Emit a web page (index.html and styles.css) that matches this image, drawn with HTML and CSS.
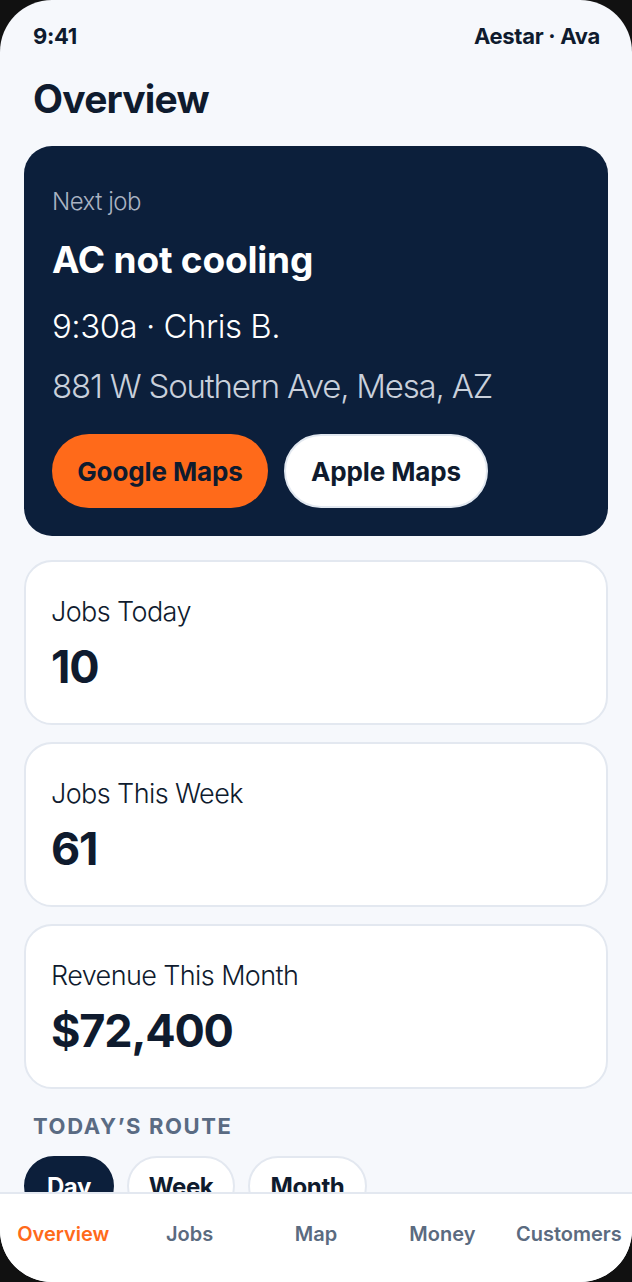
FILE: index.html
```html
<!DOCTYPE html>
<html lang="en">
<head>
<meta charset="utf-8">
<title>Overview</title>
<link rel="stylesheet" href="styles.css">
</head>
<body>
<div class="phone">
  <div class="scroll">
    <div class="status">
      <span class="time">9:41</span>
      <span class="account">Aestar · Ava</span>
    </div>
    <h1 class="title">Overview</h1>
    <section class="next">
      <div class="next-label">Next job</div>
      <div class="next-title">AC not cooling</div>
      <div class="next-when">9:30a · Chris B.</div>
      <div class="next-addr">881 W Southern Ave, Mesa, AZ</div>
      <div class="next-actions">
        <button class="btn btn-orange">Google Maps</button>
        <button class="btn btn-white">Apple Maps</button>
      </div>
    </section>
    <section class="stat">
      <div class="stat-label">Jobs Today</div>
      <div class="stat-value">10</div>
    </section>
    <section class="stat">
      <div class="stat-label">Jobs This Week</div>
      <div class="stat-value">61</div>
    </section>
    <section class="stat">
      <div class="stat-label">Revenue This Month</div>
      <div class="stat-value">$72,400</div>
    </section>
    <div class="route-head">TODAY’S ROUTE</div>
    <div class="pills">
      <span class="pill pill-active">Day</span>
      <span class="pill">Week</span>
      <span class="pill">Month</span>
    </div>
  </div>
  <nav class="tabbar">
    <span class="tab tab-active">Overview</span>
    <span class="tab">Jobs</span>
    <span class="tab">Map</span>
    <span class="tab">Money</span>
    <span class="tab">Customers</span>
  </nav>
</div>
</body>
</html>
```
FILE: styles.css
```css
* { box-sizing: border-box; }
html, body { margin: 0; padding: 0; background: #111111; }
body { font-family: "Inter", "Noto Sans", sans-serif; color: #0f1b2e; }
.phone {
  position: relative;
  width: 632px;
  height: 1282px;
  border-radius: 52px;
  overflow: hidden;
  background: #f6f8fc;
}
.scroll { padding: 0 24px; }
.status {
  display: flex;
  justify-content: space-between;
  padding: 22px 8px 0 9px;
  font-size: 22px;
  line-height: 28px;
  font-weight: 700;
  letter-spacing: -0.3px;
}
.title {
  margin: 25px 0 0 9px;
  font-size: 39px;
  line-height: 48px;
  font-weight: 700;
  letter-spacing: -0.8px;
}
.next {
  margin-top: 23px;
  background: #0c1f3b;
  border-radius: 28px;
  padding: 41px 28px 28px;
  height: 390px;
}
.next-label {
  color: #aab3c2;
  font-size: 24px;
  line-height: 30px;
  font-weight: 300;
  letter-spacing: -0.5px;
}
.next-title {
  margin-top: 21px;
  color: #ffffff;
  font-size: 37px;
  line-height: 44px;
  font-weight: 700;
  letter-spacing: -0.2px;
}
.next-when {
  margin-top: 24px;
  color: #ffffff;
  font-size: 33px;
  line-height: 40px;
  font-weight: 300;
  letter-spacing: -0.5px;
}
.next-addr {
  margin-top: 20px;
  color: #c9d0db;
  font-size: 33px;
  line-height: 40px;
  font-weight: 300;
  letter-spacing: -1.2px;
}
.next-actions {
  display: flex;
  gap: 16px;
  margin-top: 28px;
}
.btn {
  height: 74px;
  border-radius: 37px;
  font-family: inherit;
  font-size: 26px;
  font-weight: 700;
  letter-spacing: -0.1px;
  color: #0f1b2e;
  cursor: pointer;
  padding: 0;
}
.btn-orange { width: 216px; background: #ff6a1a; border: none; }
.btn-white { width: 204px; background: #ffffff; border: 2px solid #e2e8f0; }
.stat {
  margin-top: 24px;
  height: 165px;
  background: #ffffff;
  border: 2px solid #e3e8f0;
  border-radius: 28px;
  padding: 33px 25px 0;
}
.stat + .stat { margin-top: 17px; }
.stat-label {
  font-size: 27px;
  line-height: 34px;
  font-weight: 300;
  letter-spacing: -0.6px;
  color: #0f1b2e;
}
.stat-value {
  margin-top: 12px;
  font-size: 45px;
  line-height: 52px;
  font-weight: 700;
  letter-spacing: -1.2px;
  color: #0f1b2e;
}
.route-head {
  margin: 23px 0 0 9px;
  font-size: 22px;
  line-height: 28px;
  font-weight: 700;
  letter-spacing: 1.6px;
  color: #5a6b83;
}
.pills {
  display: flex;
  gap: 13px;
  margin-top: 16px;
}
.pill {
  display: flex;
  align-items: center;
  justify-content: center;
  height: 60px;
  border-radius: 30px;
  background: #ffffff;
  border: 2px solid #e3e8f0;
  font-size: 24px;
  font-weight: 700;
  letter-spacing: -0.4px;
  color: #0f1b2e;
  padding: 0 20px;
}
.pill:nth-child(1) { width: 90px; }
.pill:nth-child(2) { width: 108px; }
.pill:nth-child(3) { width: 119px; }
.pill-active { background: #0c1f3b; border-color: #0c1f3b; color: #ffffff; }
.tabbar {
  position: absolute;
  left: 0;
  right: 0;
  bottom: 0;
  height: 90px;
  background: #ffffff;
  border-top: 2px solid #e3e8f0;
  display: grid;
  grid-template-columns: repeat(5, 1fr);
  padding-top: 27px;
}
.tab {
  text-align: center;
  font-size: 20px;
  line-height: 26px;
  font-weight: 600;
  letter-spacing: 0;
  color: #5b6b80;
  align-self: start;
}
.tab-active { color: #ff6a1a; }
```
